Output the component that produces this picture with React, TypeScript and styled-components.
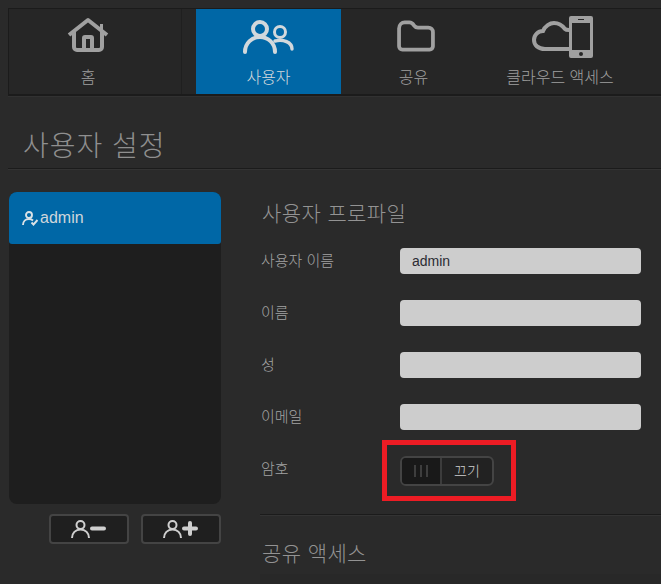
import React from "react";
import styled, { createGlobalStyle } from "styled-components";

const FONT = `"Liberation Sans", "Noto Sans CJK KR", sans-serif`;

const GlobalStyle = createGlobalStyle`
  html, body {
    margin: 0;
    padding: 0;
    height: 100%;
    background: #2a2a2a;
    overflow: hidden;
  }
`;

const Page = styled.div`
  width: 661px;
  height: 584px;
  overflow: hidden;
  padding-top: 8px;
  box-sizing: border-box;
  font-family: ${FONT};
  font-weight: 300;
  background: #2a2a2a;
`;

const NavBar = styled.nav`
  display: flex;
  height: 88px;
  margin-left: 8px;
  box-sizing: border-box;
  background: #262626;
  border: 1px solid #1b1b1b;
  border-right: none;
  border-bottom: 2px solid #1b1b1b;
  box-shadow: 0 1px 0 #313131;
`;

const NavItem = styled.a<{ $width: number; $active?: boolean; $divider?: boolean }>`
  display: flex;
  flex-direction: column;
  align-items: center;
  width: ${(p) => p.$width}px;
  height: 100%;
  box-sizing: border-box;
  background: ${(p) => (p.$active ? "#0067a6" : "transparent")};
  color: ${(p) => (p.$active ? "#d2d8dc" : "#a0a0a0")};
  border-right: ${(p) => (p.$divider ? "1px solid #1f1f1f" : "none")};
  margin-right: ${(p) => (p.$divider ? "14px" : "0")};
  padding-right: ${(p) => (p.$divider ? "14px" : "0")};
`;

const NavIconSlot = styled.div<{ $shift?: number }>`
  height: 59px;
  display: flex;
  align-items: flex-start;
  justify-content: center;
  margin-left: ${(p) => p.$shift ?? 0}px;
`;

const NavLabel = styled.span`
  font-size: 16px;
  line-height: 20px;
  white-space: nowrap;
`;

const PageTitle = styled.h1`
  margin: 0 0 0 8px;
  height: 73px;
  box-sizing: border-box;
  padding: 34px 0 0 15px;
  font-size: 28px;
  line-height: 34px;
  font-weight: 300;
  color: #8f8f8f;
  letter-spacing: 1px;
  border-bottom: 1px solid #1b1b1b;
  box-shadow: 0 1px 0 #333333;
`;

const Columns = styled.div`
  display: flex;
  margin-top: 23px;
`;

const Sidebar = styled.aside`
  width: 212px;
  margin-left: 9px;
  flex: none;
`;

const UserList = styled.div`
  height: 312px;
  background: #1e1e1e;
  border-radius: 8px;
`;

const UserItem = styled.div`
  height: 52px;
  background: #0067a6;
  border-radius: 8px 8px 3px 3px;
  display: flex;
  align-items: center;
  padding-left: 13px;
  color: #cfd6db;
  font-size: 16px;
`;

const UserButtons = styled.div`
  display: flex;
  justify-content: flex-end;
  gap: 12px;
  margin-top: 10px;
`;

const UserButton = styled.button`
  width: 80px;
  height: 30px;
  box-sizing: border-box;
  padding: 0;
  display: flex;
  align-items: center;
  justify-content: center;
  background: #1f1f1f;
  border: 2px solid #444444;
  border-radius: 4px;
`;

const Profile = styled.section`
  flex: 1;
  margin-left: 39px;
  padding-top: 8px;
  min-width: 0;
`;

const SectionTitle = styled.h2`
  margin: 0;
  font-size: 21px;
  line-height: 28px;
  font-weight: 300;
  color: #939393;
  letter-spacing: 0.4px;
  padding-left: 2px;
`;

const Fields = styled.div`
  display: flex;
  flex-direction: column;
  gap: 26px;
  margin-top: 20px;
`;

const FieldRow = styled.div`
  display: flex;
  align-items: center;
  height: 26px;
`;

const FieldLabel = styled.label<{ $lift?: number }>`
  width: 140px;
  padding-left: 1px;
  padding-bottom: ${(p) => p.$lift ?? 4}px;
  box-sizing: border-box;
  font-size: 15px;
  color: #a3a3a3;
  flex: none;
`;

const TextBox = styled.div`
  width: 241px;
  height: 26px;
  box-sizing: border-box;
  padding-left: 12px;
  background: #cdcdcd;
  border-radius: 4px;
  color: #2b2b33;
  font-size: 14px;
  font-weight: 400;
  line-height: 26px;
`;

const ToggleRow = styled(FieldRow)`
  height: 30px;
`;

const Highlighted = styled.div`
  position: relative;
`;

const RedFrame = styled.div`
  position: absolute;
  left: -18px;
  top: -16px;
  width: 134px;
  height: 61px;
  box-sizing: border-box;
  border: 5px solid #ed1c24;
  pointer-events: none;
`;

const Toggle = styled.div`
  width: 94px;
  height: 30px;
  box-sizing: border-box;
  display: flex;
  background: #222222;
  border: 2px solid #444444;
  border-radius: 6px;
  overflow: hidden;
`;

const ToggleKnob = styled.div`
  width: 38px;
  flex: none;
  display: flex;
  align-items: center;
  justify-content: center;
  gap: 4px;
  background: #191919;
  border-right: 2px solid #3c3c3c;
`;

const KnobLine = styled.i`
  display: block;
  width: 2px;
  height: 12px;
  background: #3e3e3e;
`;

const ToggleText = styled.span`
  flex: 1;
  text-align: center;
  font-size: 14px;
  line-height: 26px;
  color: #d0d0d0;
`;

const Separator = styled.hr`
  margin: 28px 0 0;
  border: none;
  height: 1px;
  background: #1b1b1b;
  box-shadow: 0 1px 0 #333333;
`;

const ShareTitle = styled(SectionTitle)`
  margin-top: 25px;
`;

const ShareBody = styled.div`
  height: 20px;
  margin-top: 6px;
  background: #282828;
`;

const HomeIcon = () => (
  <svg width="42" height="36" viewBox="0 0 42 36" style={{ marginTop: 8 }}>
    <path d="M7 15v15a3 3 0 0 0 3 3h22a3 3 0 0 0 3-3V15" fill="none" stroke="currentColor" strokeWidth="4" />
    <path d="M2 18 21 3l19 15" fill="none" stroke="currentColor" strokeWidth="4" strokeLinejoin="round" />
    <path d="M15 32V21a3 3 0 0 1 3-3h6a3 3 0 0 1 3 3v11h-4V22h-4v10z" fill="currentColor" />
    <path d="M33 7h3v8h-3z" fill="currentColor" />
  </svg>
);

const UsersIcon = () => (
  <svg width="54" height="40" viewBox="0 0 54 40" style={{ marginTop: 8 }}>
    <g fill="none" stroke="currentColor" strokeLinecap="round">
      <circle cx="18" cy="12" r="7" strokeWidth="4" />
      <path d="M3 35c0-9 7-15 15-15s15 6 15 15" strokeWidth="4" />
      <circle cx="38" cy="15" r="5.5" strokeWidth="3" />
      <path d="M33 24c8-2 17 1 17 8" strokeWidth="3.400" />
    </g>
  </svg>
);

const FolderIcon = () => (
  <svg width="38" height="32" viewBox="0 0 40 34" style={{ marginTop: 11 }}>
    <path
      d="M2 28V9c0-4 3-6.500 6-6.500h5c3 0 4 2 5 3.500 1 1.500 2 2 4 2h11c3 0 5 2 5 5V28c0 2-1.500 3.500-3.500 3.500h-29C3.500 31.500 2 30 2 28z"
      fill="none"
      stroke="currentColor"
      strokeWidth="4"
      strokeLinejoin="round"
    />
  </svg>
);

const CloudPhoneIcon = () => (
  <svg width="62" height="44" viewBox="0 0 62 44" style={{ marginTop: 6 }}>
    <path
      d="M38 34H14C7 34 3 30 3 25s4-9 9-9c2-5 7-8 11-8 5 0 8 2 11 6 1 1 2 1 4 1"
      fill="none"
      stroke="currentColor"
      strokeWidth="4"
    />
    <path
      fillRule="evenodd"
      d="M40 1h20a2 2 0 0 1 2 2v38a2 2 0 0 1-2 2H40a2 2 0 0 1-2-2V3a2 2 0 0 1 2-2zm1 7v27h18V8zm6-4v1h6V4zm3 33a2 2 0 1 0 0 4 2 2 0 0 0 0-4z"
      fill="currentColor"
    />
  </svg>
);

const UserCheckIcon = () => (
  <svg width="18" height="15" viewBox="0 0 18 15" fill="none" stroke="#dbe2e6" strokeWidth="1.900">
    <circle cx="7" cy="4" r="3" />
    <path d="M1 14c0-3.500 2.500-6 6-6 1.500 0 3 .5 4 1.500" />
    <path d="m9.500 11.500 2 2 4-4.500" />
  </svg>
);

const UserActionIcon = ({ plus }: { plus?: boolean }) => (
  <svg width="36" height="20" viewBox="0 0 36 20" fill="none" stroke="#cfcfcf">
    <circle cx="9.500" cy="6" r="4" strokeWidth="2" />
    <path d="M1 19c0-5 3.500-8.500 8.500-8.500S18 14 18 19" strokeWidth="2" />
    <path d="M21 9.500h12" strokeWidth="4" strokeLinecap="round" />
    {plus && <path d="M27 4v11" strokeWidth="4" strokeLinecap="round" />}
  </svg>
);

const App: React.FC = () => {
  return (
    <Page>
      <GlobalStyle />
      <NavBar>
        <NavItem $width={173} $divider>
          <NavIconSlot><HomeIcon /></NavIconSlot>
          <NavLabel>홈</NavLabel>
        </NavItem>
        <NavItem $width={145} $active>
          <NavIconSlot><UsersIcon /></NavIconSlot>
          <NavLabel>사용자</NavLabel>
        </NavItem>
        <NavItem $width={145}>
          <NavIconSlot $shift={5}><FolderIcon /></NavIconSlot>
          <NavLabel>공유</NavLabel>
        </NavItem>
        <NavItem $width={148}>
          <NavIconSlot $shift={4}><CloudPhoneIcon /></NavIconSlot>
          <NavLabel>클라우드 액세스</NavLabel>
        </NavItem>
      </NavBar>

      <PageTitle>사용자 설정</PageTitle>

      <Columns>
        <Sidebar>
          <UserList>
            <UserItem><UserCheckIcon />admin</UserItem>
          </UserList>
          <UserButtons>
            <UserButton><UserActionIcon /></UserButton>
            <UserButton><UserActionIcon plus /></UserButton>
          </UserButtons>
        </Sidebar>

        <Profile>
          <SectionTitle>사용자 프로파일</SectionTitle>
          <Fields>
            <FieldRow>
              <FieldLabel>사용자 이름</FieldLabel>
              <TextBox>admin</TextBox>
            </FieldRow>
            <FieldRow>
              <FieldLabel>이름</FieldLabel>
              <TextBox />
            </FieldRow>
            <FieldRow>
              <FieldLabel>성</FieldLabel>
              <TextBox />
            </FieldRow>
            <FieldRow>
              <FieldLabel>이메일</FieldLabel>
              <TextBox />
            </FieldRow>
            <ToggleRow>
              <FieldLabel $lift={8}>암호</FieldLabel>
              <Highlighted>
                <Toggle>
                  <ToggleKnob><KnobLine /><KnobLine /><KnobLine /></ToggleKnob>
                  <ToggleText>끄기</ToggleText>
                </Toggle>
                <RedFrame />
              </Highlighted>
            </ToggleRow>
          </Fields>
          <Separator />
          <ShareTitle>공유 액세스</ShareTitle>
          <ShareBody />
        </Profile>
      </Columns>
    </Page>
  );
};

export default App;
